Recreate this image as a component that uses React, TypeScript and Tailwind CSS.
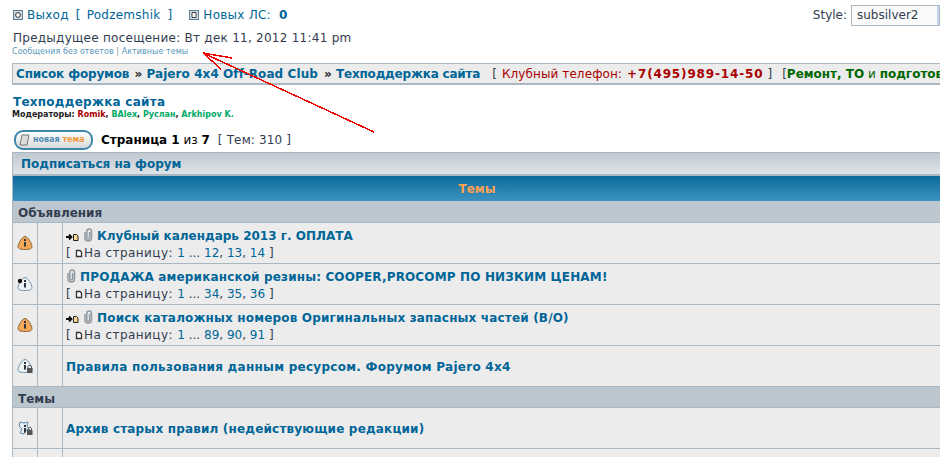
const font = "[font-family:'DejaVu_Sans',Verdana,sans-serif]";

function Info({ kind }: { kind: "orange" | "white" | "lock" | "moved" }) {
  const fill = kind === "orange" ? "#f4a857" : "#eef3f6";
  const stroke = kind === "orange" ? "#8a6a40" : "#6d93ad";
  return (
    <svg width="16" height="16" viewBox="0 0 16 16">
      {kind === "moved" ? (
        <path d="M3 2 L7 3 L11 2 L10 6 L13 10 L9 10 L7 14 L3 13 L5 9 L2 6 Z" fill="#e6eef3" stroke="#5f8cab" />
      ) : (
        <path d="M8 1.5 C11 1.5 15 9 15 11.5 C15 14 12 14.5 8 14.5 C4 14.5 1 14 1 11.5 C1 9 5 1.5 8 1.5 Z" fill={fill} stroke={stroke} />
      )}
      <rect x="7" y={kind === "moved" ? 5 : 4} width="2" height="2" fill="#2b3640" />
      <rect x="7" y={kind === "moved" ? 8 : 7} width="2" height="4.5" fill="#2b3640" />
      {kind === "white" && <circle cx="3" cy="5" r="2.2" fill="#111" />}
      {(kind === "lock" || kind === "moved") && (
        <g>
          <rect x="10" y="10" width="5.5" height="5" fill="#555" />
          <path d="M11 10 V8.5 C11 7 14.5 7 14.5 8.5 V10" fill="none" stroke="#555" />
        </g>
      )}
    </svg>
  );
}

function Clip() {
  return (
    <svg width="10" height="14" viewBox="0 0 10 14" className="shrink-0 -mt-[3px]">
      <path d="M2 4 V10 C2 14 8.5 14 8.5 10 V3.5 C8.5 0 3.8 0 3.8 3.5 V9.5 C3.8 11.5 6.6 11.5 6.6 9.5 V4" fill="none" stroke="#8f9aa3" strokeWidth="1.5" />
    </svg>
  );
}

function NewArrow() {
  return (
    <svg width="13" height="8" viewBox="0 0 13 8" className="shrink-0 mt-[2px]">
      <path d="M0 4 H5 M3 1.5 L5.5 4 L3 6.5" fill="none" stroke="#111" strokeWidth="1.8" />
      <path d="M7.5 1.5 H10.5 L12 3 V7.5 H7.5 Z" fill="#f6d98f" stroke="#222" />
    </svg>
  );
}

function PageIcon() {
  return (
    <svg width="8" height="9" viewBox="0 0 8 9" className="shrink-0 mr-[1px]">
      <path d="M1.5 1.5 H5 L6.5 3 V7.5 H1.5 Z" fill="#fff" stroke="#333" strokeWidth="1.3" />
    </svg>
  );
}

function Pager({ pages }: { pages: string[] }) {
  return (
    <div className="flex items-center h-[15px] text-[12px] text-[#323d4f] whitespace-pre mt-px">
      <span className="tracking-[0.2px]">{"[ "}</span>
      <PageIcon />
      <span className="tracking-[0.45px]">{"На страницу: "}</span>
      <span className="text-[#006597]">{pages[0]}</span>
      {" ... "}
      <span className="text-[#006597]">{pages[1]}</span>
      {", "}
      <span className="text-[#006597]">{pages[2]}</span>
      {", "}
      <span className="text-[#006597]">{pages[3]}</span>
      {" ]"}
    </div>
  );
}

function Row({
  icon,
  title,
  pages,
  arrow,
  clip,
  titleClass = "",
}: {
  icon: "orange" | "white" | "lock" | "moved";
  title: string;
  pages?: string[];
  arrow?: boolean;
  clip?: boolean;
  titleClass?: string;
}) {
  return (
    <div className="flex h-[41px] border-b border-[#a9b8c2] bg-[#ececec]">
      <div className="w-[25px] shrink-0 flex items-center justify-center border-r border-[#a9b8c2]">
        <Info kind={icon} />
      </div>
      <div className="w-[25px] shrink-0 border-r border-[#a9b8c2]" />
      <div className="flex flex-col justify-center pl-[3px] pt-[2px] whitespace-nowrap min-w-0">
        <div className="flex items-center gap-[4px] h-[17px]">
          {arrow && <NewArrow />}
          {clip && <Clip />}
          <span className={`text-[12px] font-bold text-[#006597] ${titleClass}`}>{title}</span>
        </div>
        {pages && <Pager pages={pages} />}
      </div>
    </div>
  );
}

function Cat({ label, first }: { label: string; first?: boolean }) {
  return (
    <div className={`${first ? "h-[22px] pt-[2px]" : "h-[21px] pt-[4px]"} flex items-center pl-[5px] bg-[#bcc6ce] border-b border-[#a9b8c2] text-[12px] font-bold text-[#323d4f]`}>
      {label}
    </div>
  );
}

export default function App() {
  return (
    <div className={`${font} relative w-[940px] h-[457px] overflow-hidden bg-white text-[#323d4f]`}>
      <div className="flex justify-between pt-[5px] pl-[13px] h-[27px]">
        <div className="flex items-center h-[20px] text-[12px] tracking-[0.25px] text-[#006597] whitespace-pre">
          <svg width="10" height="10" viewBox="0 0 10 10" className="mr-[4px]">
            <rect x=".5" y=".5" width="9" height="9" fill="#cfdbe3" stroke="#5d7f95" />
            <circle cx="5" cy="5" r="2.4" fill="#fff" stroke="#333" />
          </svg>
          <span>Выход</span>
          <span className="ml-[7px]">[</span>
          <span className="ml-[6px]">Podzemshik</span>
          <span className="ml-[7px]">]</span>
          <svg width="10" height="10" viewBox="0 0 10 10" className="ml-[17px] mr-[4px]">
            <rect x=".5" y=".5" width="9" height="9" fill="#cfdbe3" stroke="#5d7f95" />
            <path d="M3 2.5 H7 V7.5 H3 Z" fill="#fff" stroke="#444" />
          </svg>
          <span>Новых ЛС:</span>
          <b className="ml-[8px]">0</b>
        </div>
        <div className="flex items-center h-[20px] text-[12px] text-[#323d4f] shrink-0">
          Style:
          <div className="ml-[4px] w-[89px] h-[21px] bg-[#fafafa] border border-[#a9b8c2] pl-[5px] text-[12px] flex items-center justify-between">
            subsilver2
            <div className="w-[2px] h-[19px] bg-[#c4d4ee]" />
          </div>
        </div>
      </div>
      <div className="pl-[13px] h-[18px] mt-[2px] text-[12px] tracking-[0.26px] leading-[18px] text-[#323d4f]">
        Предыдущее посещение: Вт дек 11, 2012 11:41 pm
      </div>
      <div className="pl-[12px] h-[12px] -mt-px text-[8px] tracking-[0.05px] leading-[12px] text-[#5a97b8]">
        Сообщения без ответов <span className="text-[#8b979f]">|</span> Активные темы
      </div>
      <div className="ml-[12px] mt-[5px] h-[22px] w-[1000px] flex items-center pl-[3px] bg-[#ececec] border-2 border-[#a9b8c2] border-l-[1px] border-t-[1px] whitespace-pre text-[12px]">
        <b className="text-[#006597] tracking-[-0.15px]">Список форумов</b>
        <b className="text-[#222] ml-[1px]"> » </b>
        <b className="text-[#006597] tracking-[0.08px]">Pajero 4x4 Off-Road Club</b>
        <b className="text-[#222] ml-[2px]"> » </b>
        <b className="text-[#006597] tracking-[-0.2px]">Техподдержка сайта</b>
        <span className="ml-[12px]">[</span>
        <span className="text-[#aa0000] ml-[5px] tracking-[0.1px]">Клубный телефон:</span>
        <b className="text-[#aa0000] ml-[5px] tracking-[0.85px]">+7(495)989-14-50</b>
        <span className="ml-[4px]">]</span>
        <span className="ml-[10px]">[</span>
        <b className="text-[#006600]">Ремонт, ТО</b>
        <span className="text-[#006600]"> и </span>
        <b className="text-[#006600]">подготовка</b>
      </div>
      <div className="pl-[13px] mt-[10px] h-[15px] text-[12px] tracking-[0.25px] leading-[15px] font-bold text-[#006597]">Техподдержка сайта</div>
      <div className="pl-[12px] h-[11px] text-[8px] leading-[10px] font-bold text-[#222]">
        Модераторы: <span className="text-[#aa0000]">Romik</span>, <span className="text-[#00aa66]">BAlex</span>,{" "}
        <span className="text-[#00aa66]">Руслан</span>, <span className="text-[#00aa66]">Arkhipov K.</span>
      </div>
      <div className="flex items-center pl-[14px] h-[22px] mt-[8px] whitespace-pre">
        <div className="w-[79px] h-[20px] rounded-[9px] border-2 border-[#3f86ad] bg-gradient-to-b from-[#ffffff] to-[#d9d9d9] flex items-center pl-[3px] gap-[3px] text-[8px] font-bold">
          <svg width="11" height="12" viewBox="0 0 11 12">
            <path d="M3 1 H10 L8 11 H1 Z" fill="#ddd" stroke="#777" />
          </svg>
          <span className="text-[#4d8db2]">новая <span className="text-[#f09a3c]">тема</span></span>
        </div>
        <span className="ml-[8px] text-[12px] text-black">
          <b>Страница 1</b> из <b>7</b>
        </span>
        <span className="ml-[8px] text-[12px] tracking-[0.15px]">[ Тем: 310 ]</span>
      </div>
      <div className="ml-[12px] mt-px w-[1000px] border-l border-t border-[#a9b8c2]">
        <div className="h-[23px] flex items-center pl-[8px] bg-gradient-to-b from-[#c0c8d0] to-[#dfe3e7] border-b-2 border-[#a9b8c2] text-[12px] font-bold text-[#006597]">
          Подписаться на форум
        </div>
        <div className="h-[25px] w-[928px] flex items-center justify-center bg-gradient-to-b from-[#0a6a9c] to-[#3a93c0] text-[12px] font-bold text-[#ffa34f]">
          Темы
        </div>
        <Cat first label="Объявления" />
        <Row icon="orange" arrow clip title="Клубный календарь 2013 г. ОПЛАТА" pages={["1", "12", "13", "14"]} />
        <Row icon="white" clip titleClass="tracking-[0.15px]" title="ПРОДАЖА американской резины: COOPER,PROCOMP ПО НИЗКИМ ЦЕНАМ!" pages={["1", "34", "35", "36"]} />
        <Row icon="orange" arrow clip titleClass="tracking-[0.17px]" title="Поиск каталожных номеров Оригинальных запасных частей (B/O)" pages={["1", "89", "90", "91"]} />
        <Row icon="lock" titleClass="tracking-[0.27px]" title="Правила пользования данным ресурсом. Форумом Pajero 4x4" />
        <Cat label="Темы" />
        <Row icon="moved" titleClass="tracking-[0.18px]" title="Архив старых правил (недействующие редакции)" />
        <Row icon="white" title="" />
      </div>
      <svg className="absolute left-0 top-0 pointer-events-none" width="940" height="457" shapeRendering="crispEdges">
        <path d="M374 132 L203 53 L232 58 M203 53 L221 69" fill="none" stroke="#f00000" strokeWidth="1.5" />
      </svg>
    </div>
  );
}
